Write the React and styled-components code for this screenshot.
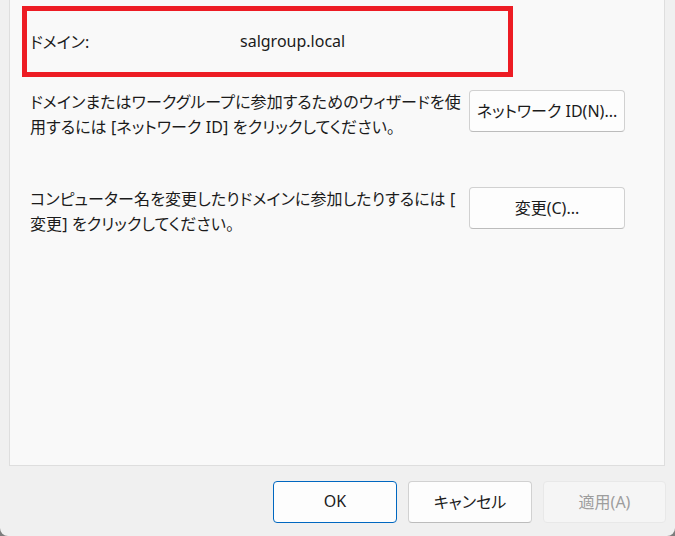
import React from "react";
import styled, { createGlobalStyle } from "styled-components";

const Global = createGlobalStyle`
  html, body { margin: 0; padding: 0; background: #7d7d7d; }
  body { width: 675px; height: 536px; overflow: hidden; }
  #root { width: 675px; height: 536px; }
`;

const Window = styled.div`
  width: 675px;
  height: 536px;
  background: #f0f0f0;
  border-radius: 0 0 8px 8px;
  display: flex;
  flex-direction: column;
  font-family: "Noto Sans", "Noto Sans CJK JP", sans-serif;
  font-feature-settings: "palt";
  font-size: 16px;
  color: #1b1b1b;
  overflow: hidden;
`;

const Panel = styled.div`
  margin-left: 9px;
  width: 656px;
  height: 466px;
  background: #f9f9f9;
  border: 1px solid #dedede;
  border-top: none;
  display: flex;
  flex-direction: column;
  padding: 6px 0 0 12px;
  box-sizing: border-box;
`;

const Highlight = styled.div`
  width: 491px;
  height: 71px;
  box-sizing: border-box;
  border: 5px solid #ed1c24;
  display: flex;
  align-items: center;
  padding: 0 0 2px 3px;
`;

const Label = styled.span`
  width: 210px;
  white-space: nowrap;
`;

const Value = styled.span`
  white-space: nowrap;
`;

const Section = styled.div`
  display: flex;
  align-items: flex-start;
  justify-content: space-between;
  width: 603px;
  margin-top: ${(p) => p.$top}px;
  padding-left: 8px;
  box-sizing: border-box;
`;

const Text = styled.p`
  margin: 0;
  line-height: 25px;
  white-space: nowrap;
  letter-spacing: 0.1px;
`;

const Button = styled.button`
  width: ${(p) => p.$w || 156}px;
  height: 42px;
  box-sizing: border-box;
  border-radius: 4px;
  font-family: inherit;
  font-feature-settings: "palt";
  font-size: 16px;
  display: flex;
  align-items: center;
  justify-content: center;
  padding: 0 0 2px;
  background: ${(p) => (p.$disabled ? "#f5f5f5" : "#fdfdfd")};
  color: ${(p) => (p.$disabled ? "#9d9d9d" : "#1b1b1b")};
  border: 1px solid
    ${(p) => (p.$primary ? "#0067c0" : p.$disabled ? "#e8e8e8" : "#d1d1d1")};
  border-bottom-color: ${(p) =>
    p.$primary ? "#0067c0" : p.$disabled ? "#e8e8e8" : "#bcbcbc"};
`;

const Footer = styled.div`
  display: flex;
  justify-content: flex-end;
  gap: 11px;
  padding: 15px 9px 0 0;
`;

export default function App() {
  return (
    <>
      <Global />
      <Window>
        <Panel>
          <Highlight>
            <Label>ドメイン:</Label>
            <Value>salgroup.local</Value>
          </Highlight>
          <Section $top={13}>
            <Text>
              ドメインまたはワークグループに参加するためのウィザードを使
              <br />
              用するには [ネットワーク ID] をクリックしてください。
            </Text>
            <Button>ネットワーク ID(N)...</Button>
          </Section>
          <Section $top={47}>
            <Text>
              コンピューター名を変更したりドメインに参加したりするには [
              <br />
              変更] をクリックしてください。
            </Text>
            <Button>変更(C)...</Button>
          </Section>
        </Panel>
        <Footer>
          <Button $w={124} $primary>OK</Button>
          <Button $w={124}>キャンセル</Button>
          <Button $w={123} $disabled>適用(A)</Button>
        </Footer>
      </Window>
    </>
  );
}
